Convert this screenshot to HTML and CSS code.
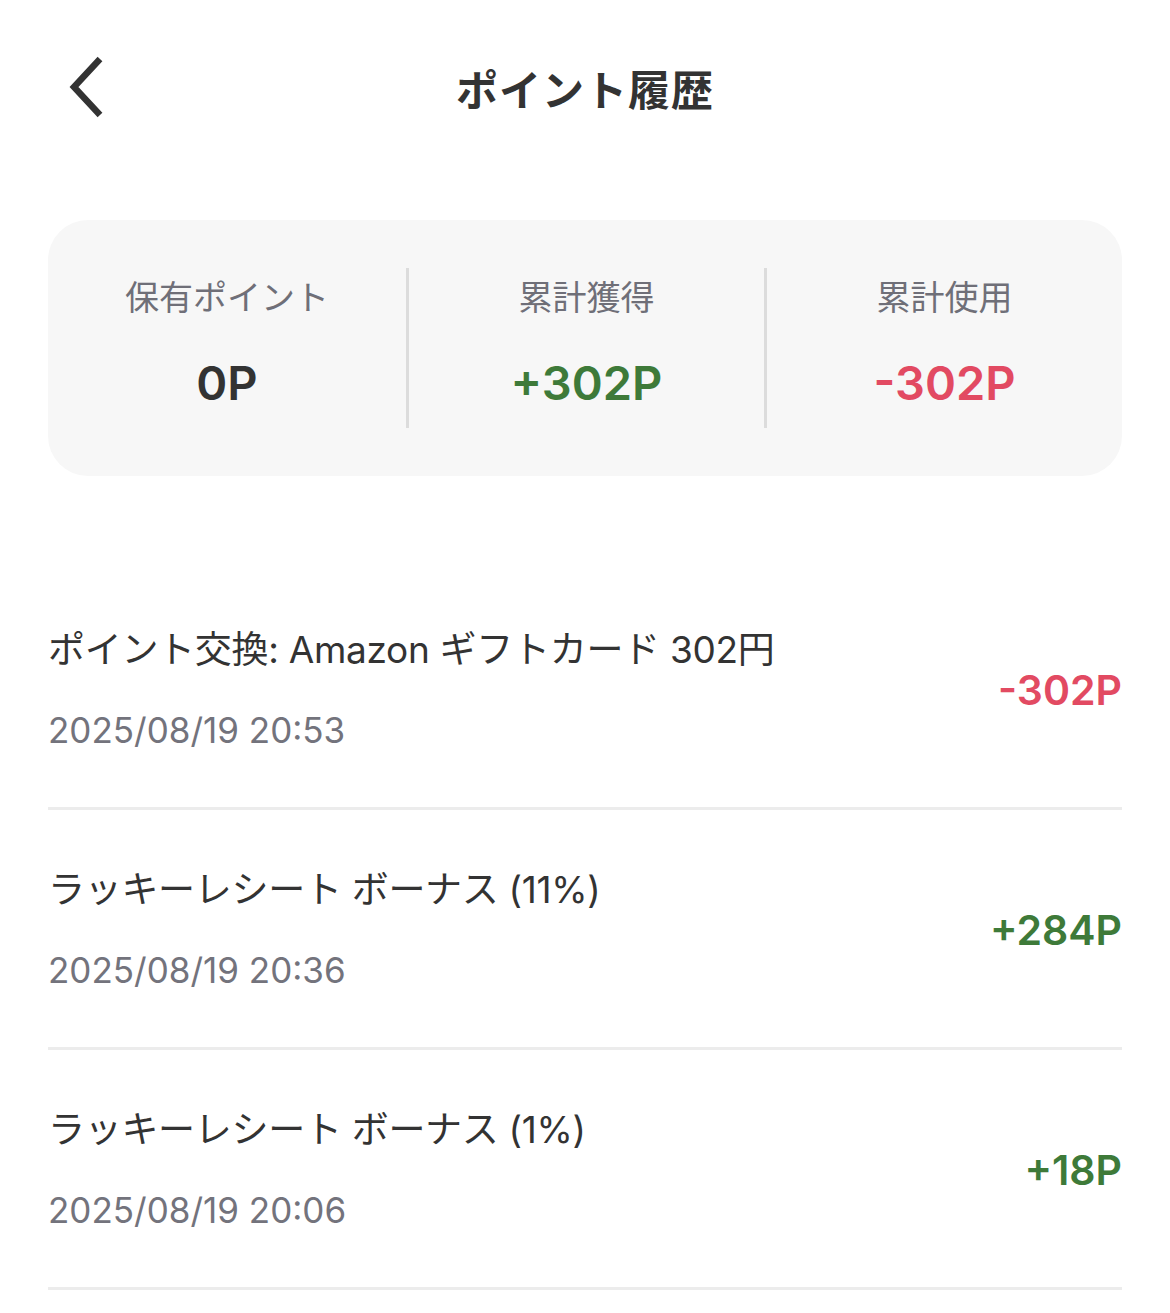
FILE: index.html
```html
<!DOCTYPE html>
<html lang="ja">
<head>
<meta charset="UTF-8">
<meta name="viewport" content="width=device-width, initial-scale=1.0">
<title>ポイント履歴</title>
<link rel="stylesheet" href="styles.css">
</head>
<body>

<div class="page">
  <header class="top-bar">
    <button class="back-btn" aria-label="戻る">
      <svg width="40" height="64" viewBox="0 0 40 64">
        <path d="M34 4 L8 32 L34 60" fill="none" stroke="#333" stroke-width="6.5" stroke-linecap="butt" stroke-linejoin="miter"/>
      </svg>
    </button>
    <h1 class="page-title">ポイント履歴</h1>
  </header>

  <section class="summary">
    <div class="summary-col">
      <div class="summary-label">保有ポイント</div>
      <div class="summary-value">0P</div>
    </div>
    <div class="summary-col">
      <div class="summary-label">累計獲得</div>
      <div class="summary-value plus">+302P</div>
    </div>
    <div class="summary-col">
      <div class="summary-label">累計使用</div>
      <div class="summary-value minus">-302P</div>
    </div>
  </section>

  <ul class="history">
    <li class="history-item">
      <div class="history-text">
        <div class="history-title">ポイント交換: Amazon ギフトカード 302円</div>
        <div class="history-date">2025/08/19 20:53</div>
      </div>
      <div class="history-amount minus">-302P</div>
    </li>
    <li class="history-item">
      <div class="history-text">
        <div class="history-title">ラッキーレシート ボーナス (11%)</div>
        <div class="history-date">2025/08/19 20:36</div>
      </div>
      <div class="history-amount plus">+284P</div>
    </li>
    <li class="history-item">
      <div class="history-text">
        <div class="history-title">ラッキーレシート ボーナス (1%)</div>
        <div class="history-date">2025/08/19 20:06</div>
      </div>
      <div class="history-amount plus">+18P</div>
    </li>
  </ul>
</div>

</body>
</html>
```

FILE: styles.css
```css
body {
  font-family: 'Inter', 'Noto Sans CJK JP', sans-serif;
  margin: 0;
  padding: 0;
  background-color: #fff;
  color: #333;
}

.page {
  padding: 0 48px;
}

.top-bar {
  position: relative;
  height: 175px;
  display: flex;
  align-items: center;
  justify-content: center;
}

.back-btn {
  position: absolute;
  left: 18px;
  top: 55px;
  background: none;
  border: none;
  padding: 0;
  cursor: pointer;
}

.back-btn svg {
  display: block;
}

.page-title {
  margin: 0;
  font-size: 42px;
  font-weight: bold;
  color: #333;
  letter-spacing: 1px;
}

.summary {
  margin-top: 45px;
  display: grid;
  grid-template-columns: 1fr 1fr 1fr;
  background: #f7f7f7;
  border-radius: 40px;
  padding: 48px 0;
}

.summary-col {
  text-align: center;
  display: flex;
  flex-direction: column;
  gap: 33px;
  padding: 6px 0 0;
  height: 160px;
  box-sizing: border-box;
}

.summary-col + .summary-col {
  border-left: 3px solid #dcdcdc;
}

.summary-label {
  font-size: 34px;
  color: #6f6f78;
  line-height: 48px;
}

.summary-value {
  font-size: 47px;
  font-weight: 600;
  color: #333;
  line-height: 56px;
}

.plus {
  color: #3e7a39;
}

.minus {
  color: #e24a62;
}

.history {
  list-style: none;
  margin: 94px 0 0;
  padding: 0;
}

.history-item {
  display: flex;
  align-items: center;
  justify-content: space-between;
  padding: 56px 0 53px;
  border-bottom: 3px solid #ececec;
}

.history-text {
  display: grid;
  gap: 32px;
}

.history-title {
  font-size: 37px;
  line-height: 48px;
  color: #333;
  letter-spacing: -0.3px;
}

.history-date {
  font-size: 35px;
  line-height: 48px;
  color: #73737c;
}

.history-amount {
  font-size: 41px;
  font-weight: 600;
}
```
